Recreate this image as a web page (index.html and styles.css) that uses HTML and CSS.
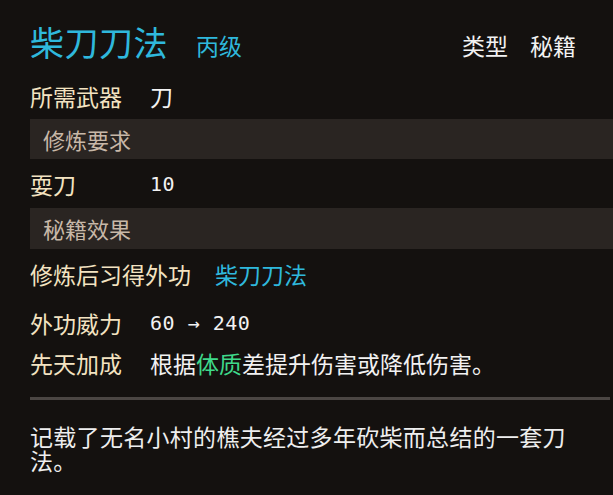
FILE: index.html
```html
<!DOCTYPE html>
<html lang="zh">
<head>
<meta charset="utf-8">
<link rel="stylesheet" href="styles.css">
</head>
<body>
<div class="panel">
  <div class="title-row">
    <span class="title">柴刀刀法</span>
    <span class="grade">丙级</span>
    <span class="type">
      <span>类型</span>
      <span>秘籍</span>
    </span>
  </div>
  <div class="row row-weapon">
    <span class="label">所需武器</span>
    <span class="value">刀</span>
  </div>
  <div class="bar">修炼要求</div>
  <div class="row row-skill">
    <span class="label">耍刀</span>
    <span class="value num">10</span>
  </div>
  <div class="bar bar2">秘籍效果</div>
  <div class="row row-learn">
    <span class="label">修炼后习得外功</span>
    <span class="value cyan">柴刀刀法</span>
  </div>
  <div class="row row-power">
    <span class="label">外功威力</span>
    <span class="value num">60 → 240</span>
  </div>
  <div class="row row-bonus">
    <span class="label">先天加成</span>
    <span class="value">根据<span class="green">体质</span>差提升伤害或降低伤害。</span>
  </div>
  <div class="sep"></div>
  <p class="desc">记载了无名小村的樵夫经过多年砍柴而总结的一套刀法。</p>
</div>
</body>
</html>
```

FILE: styles.css
```css
html, body {
  margin: 0;
  padding: 0;
  background: #14110f;
}
body {
  width: 613px;
  height: 495px;
  overflow: hidden;
  font-family: "Noto Sans CJK SC", "Noto Sans", sans-serif;
}
.panel {
  padding: 18px 0 0 30px;
  display: flex;
  flex-direction: column;
}
.title-row {
  height: 48px;
  display: flex;
  align-items: center;
  padding-right: 37px;
}
.title {
  font-size: 34px;
  line-height: 48px;
  color: #2fb8dc;
  letter-spacing: 0.5px;
}
.grade {
  font-size: 23px;
  color: #2fb8dc;
  margin-left: 28px;
  margin-top: 6px;
}
.type {
  margin-left: auto;
  display: flex;
  gap: 22px;
  font-size: 23px;
  color: #f2f2f2;
  margin-top: 6px;
}
.row {
  display: flex;
  align-items: center;
  gap: 24px;
  font-size: 23px;
}
.label {
  min-width: 96px;
  color: #f3e3c1;
}
.value {
  color: #f2f2f2;
}
.num {
  font-family: "DejaVu Sans Mono", monospace;
  font-size: 20px;
  letter-spacing: 0.5px;
}
.cyan { color: #2fb8dc; }
.green { color: #3fd98a; }
.row-weapon { height: 24px; padding: 18px 0 11px; }
.row-skill { height: 49px; }
.row-learn { height: 50px; }
.row-power { height: 48px; }
.row-bonus { height: 32px; }
.bar {
  height: 40px;
  line-height: 40px;
  background: #2a2522;
  padding-left: 13px;
  font-size: 22px;
  color: #c8b8a8;
}
.bar2 { height: 41px; line-height: 41px; }
.sep {
  margin-top: 18px;
  height: 3px;
  margin-right: 3px;
  background: #4b4643;
}
.desc {
  margin: 24px 0 0;
  width: 548px;
  font-size: 23px;
  line-height: 24px;
  letter-spacing: 0.3px;
  color: #eeeeee;
}
```
